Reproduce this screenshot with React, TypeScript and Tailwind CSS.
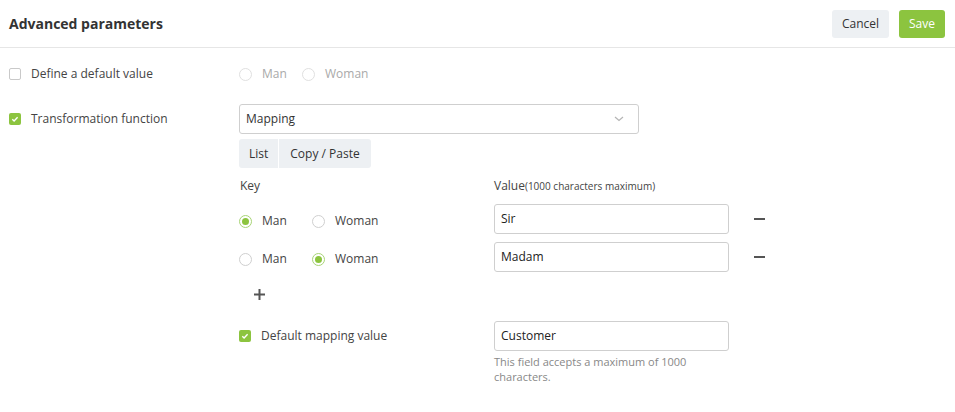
import React from 'react';

const GREEN = 'bg-[#8cc43f]';

function Check({ on }: { on?: boolean }) {
  if (on) {
    return (
      <span className={`flex h-[12px] w-[12px] items-center justify-center rounded-[2px] ${GREEN}`}>
        <svg width="8" height="8" viewBox="0 0 8 8">
          <path d="M1.3 4.2 L3.1 5.9 L6.6 2.2" fill="none" stroke="white" strokeWidth="1.4" />
        </svg>
      </span>
    );
  }
  return <span className="h-[12px] w-[12px] rounded-[2px] border border-[#c9c9c9] bg-white" />;
}

function Radio({ on, disabled }: { on?: boolean; disabled?: boolean }) {
  return (
    <span
      className={`flex h-[13px] w-[13px] items-center justify-center rounded-full border bg-white ${
        on ? 'border-[#a8d476]' : disabled ? 'border-[#e0e0e0]' : 'border-[#cfcfcf]'
      }`}
    >
      {on && <span className="h-[7px] w-[7px] rounded-full bg-[#8cc43f]" />}
    </span>
  );
}

function RadioPair({ pick, disabled }: { pick?: 'man' | 'woman'; disabled?: boolean }) {
  const txt = disabled ? 'text-[#a9a9a9]' : 'text-[#444]';
  return (
    <div className="flex items-center">
      <label className={`flex items-center gap-[10px] ${disabled ? 'w-[63px]' : 'w-[73px]'}`}>
        <Radio on={pick === 'man'} disabled={disabled} />
        <span className={txt}>Man</span>
      </label>
      <label className="flex items-center gap-[10px]">
        <Radio on={pick === 'woman'} disabled={disabled} />
        <span className={txt}>Woman</span>
      </label>
    </div>
  );
}

function TextBox({ value }: { value: string }) {
  return (
    <div className="flex h-[30px] w-[235px] items-center rounded-[3px] border border-[#cfcfcf] px-[6px] text-[#222]">
      {value}
    </div>
  );
}

function Minus() {
  return <span className="ml-[25px] block h-[2px] w-[11px] bg-[#555]" />;
}

export default function App() {
  return (
    <div className="h-[412px] w-[955px] bg-white text-[12px] text-[#444]" style={{ fontFamily: '"Open Sans", sans-serif' }}>
      <header className="flex h-[48px] items-center justify-between border-b border-[#e6e6e6] pl-[9px] pr-[10px]">
        <h1 className="text-[14px] font-bold text-[#333]">Advanced parameters</h1>
        <div className="flex items-center gap-[10px]">
          <button className="h-[28px] rounded-[3px] bg-[#edf0f3] px-[10px] text-[#333]">Cancel</button>
          <button className={`h-[28px] rounded-[3px] ${GREEN} px-[10px] text-white`}>Save</button>
        </div>
      </header>

      <div className="pl-[9px] pt-[14px]">
        <div className="flex h-[24px] items-center">
          <label className="flex w-[230px] items-center gap-[10px]">
            <Check />
            <span>Define a default value</span>
          </label>
          <RadioPair disabled />
        </div>

        <div className="mt-[18px] flex items-start">
          <label className="flex h-[30px] w-[230px] items-center gap-[10px]">
            <Check on />
            <span>Transformation function</span>
          </label>

          <div className="flex flex-col">
            <div className="flex h-[30px] w-[400px] items-center justify-between rounded-[3px] border border-[#cfcfcf] px-[6px] text-[#333]">
              <span>Mapping</span>
              <svg width="10" height="6" viewBox="0 0 10 6" className="mr-[8px]">
                <path d="M1 1 L5 4.5 L9 1" fill="none" stroke="#b5b5b5" strokeWidth="1.2" />
              </svg>
            </div>

            <div className="mt-[5px] flex h-[29px] gap-[1px]">
              <button className="rounded-l-[3px] bg-[#edf0f3] px-[10px] text-[#333]">List</button>
              <button className="rounded-r-[3px] bg-[#edf0f3] px-[11px] text-[#333]">Copy / Paste</button>
            </div>

            <div className="mt-[9px] flex h-[18px] items-center">
              <span className="w-[255px] pl-[1px]">Key</span>
              <span>
                Value<span className="text-[10px]">(1000 characters maximum)</span>
              </span>
            </div>

            <div className="mt-[9px] flex flex-col gap-[8px]">
              <div className="flex items-center">
                <div className="w-[255px] pt-[4px]">
                  <RadioPair pick="man" />
                </div>
                <TextBox value="Sir" />
                <Minus />
              </div>
              <div className="flex items-center">
                <div className="w-[255px] pt-[4px]">
                  <RadioPair pick="woman" />
                </div>
                <TextBox value="Madam" />
                <Minus />
              </div>
            </div>

            <div className="ml-[15px] mt-[14px] flex h-[16px] items-center">
              <svg width="11" height="11" viewBox="0 0 11 11">
                <path d="M5.5 0 V11 M0 5.5 H11" stroke="#555" strokeWidth="2" />
              </svg>
            </div>

            <div className="mt-[19px] flex items-start">
              <label className="flex h-[30px] w-[255px] items-center gap-[10px]">
                <Check on />
                <span>Default mapping value</span>
              </label>
              <div className="flex flex-col">
                <TextBox value="Customer" />
                <p className="mt-[3px] w-[220px] text-[11px] leading-[15px] text-[#888]">
                  This field accepts a maximum of 1000 characters.
                </p>
              </div>
            </div>
          </div>
        </div>
      </div>
    </div>
  );
}
